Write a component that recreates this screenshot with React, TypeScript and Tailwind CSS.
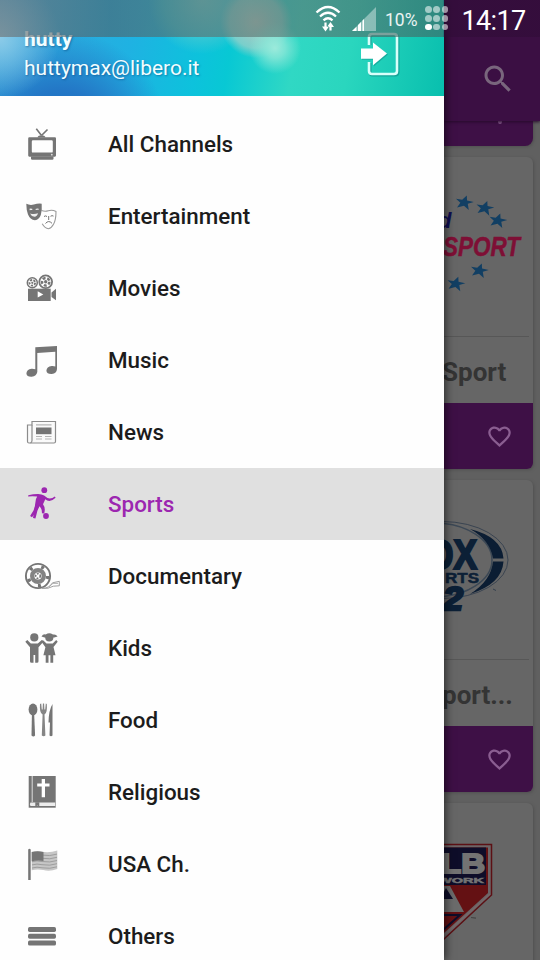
import type { ReactNode } from 'react'

const MENU: { label: string; icon: ReactNode; active?: boolean }[] = [
  { label: 'All Channels', icon: <TvIcon /> },
  { label: 'Entertainment', icon: <MasksIcon /> },
  { label: 'Movies', icon: <CameraIcon /> },
  { label: 'Music', icon: <MusicIcon /> },
  { label: 'News', icon: <NewsIcon /> },
  { label: 'Sports', icon: <SoccerIcon />, active: true },
  { label: 'Documentary', icon: <ReelIcon /> },
  { label: 'Kids', icon: <KidsIcon /> },
  { label: 'Food', icon: <CutleryIcon /> },
  { label: 'Religious', icon: <BibleIcon /> },
  { label: 'USA Ch.', icon: <FlagIcon /> },
  { label: 'Others', icon: <BarsIcon /> },
]

function MenuSvg({ children }: { children: ReactNode }) {
  return (
    <svg viewBox="0 0 36 36" className="h-9 w-9 flex-none" fill="currentColor">
      {children}
    </svg>
  )
}

function TvIcon() {
  return (
    <MenuSvg>
      <path d="M12.3 2.8l5 6.5M23.5 3.5l-6 6" stroke="currentColor" strokeWidth="1.6" fill="none" />
      <path d="M13.5 11.5c.5-3 7.5-3 8 0z" />
      <path
        fillRule="evenodd"
        d="M5.300 11.300h25.600q1.100 0 1.100 1.100v17.200q0 1.100-1.100 1.100H5.300q-1.100 0-1.100-1.100V12.400q0-1.100 1.100-1.100zM9 14.300q-1.200 0-1.200 1.200v9.900q0 1.200 1.200 1.200h18.600q1.200 0 1.200-1.200v-9.900q0-1.200-1.200-1.200z"
      />
      <path d="M7 30.500h22.500v2q0 1.200-1.200 1.200H8.200Q7 33.700 7 32.500z" />
      <circle cx="27.800" cy="28.700" r="0.900" fill="#ddd" />
    </MenuSvg>
  )
}

function MasksIcon() {
  return (
    <MenuSvg>
      <path d="M17.500 12.500q3.500 1.300 6.800.2 4-1.300 7.700.8 0 8.500-2.500 12.800-2 3.800-5 4.500-3.500-.3-6.300-5" fill="#fff" stroke="#9a9a9a" strokeWidth="1.100" />
      <path d="M2.300 5.800q3.500 1.800 7.500.8 4-1.400 7.900-.9.500 7-.9 11.300-1.500 4.500-5.800 5.300Q6 21.500 4 16.500 2.300 12 2.300 5.800z" />
      <path d="M5.500 10.800q1.700-.8 3 .3l-.4 1q-1.300-.4-2.400.1zM11.500 11.100q1.500-1.100 3.200-.4l-.2 1.200q-1.300-.4-2.700.2zM6 15.500q4.500 1.200 8-.3-1 3.400-3.500 3.600-3.100-.2-4.500-3.300z" fill="#eee" />
      <path d="M20 18.500q1.500-1.200 3 0M26.500 18.300q1.500-1.200 3-.2M21.500 25.500q3-3.800 6.500-.2M24.700 18v4" fill="none" stroke="currentColor" strokeWidth="1" />
    </MenuSvg>
  )
}

function CameraIcon() {
  return (
    <MenuSvg>
      <g fill="none" stroke="currentColor">
        <circle cx="8.300" cy="12.800" r="5" strokeWidth="1.500" />
        <circle cx="8.300" cy="12.800" r="2.800" strokeWidth="1.900" strokeDasharray="2.200 1.300" />
        <circle cx="21.700" cy="11.800" r="6.400" strokeWidth="1.800" />
        <circle cx="21.700" cy="11.800" r="3.700" strokeWidth="2.500" strokeDasharray="2.900 1.750" />
      </g>
      <circle cx="21.700" cy="11.800" r="1.700" />
      <circle cx="8.300" cy="12.800" r="1.100" />
      <path d="M4 18.700h22.700V31H4z" />
      <path d="M27.500 22.500l4.500-3.800v11.500l-4.500-3.300z" />
      <path d="M13.700 21.200v6.400l5.600-3.200z" fill="#fff" />
    </MenuSvg>
  )
}

function MusicIcon() {
  return (
    <MenuSvg>
      <path d="M11.300 5.200L33 4v23q-.3 4.300-5.200 5-5 .2-5.400-3.200.2-4 5.300-4.800 2-.2 3.600.5V9.800l-18 1.200v19q-.7 4-5.600 4.700-4.900.2-5.300-3.200.2-4 5.200-4.800 2-.1 3.700.6z" />
    </MenuSvg>
  )
}

function NewsIcon() {
  return (
    <MenuSvg>
      <path d="M8 7.500h23.500v20q0 1.500-1.500 1.500H5q-1.500 0-1.500-1.500V11H8z" fill="#fafafa" stroke="#8c8c8c" strokeWidth="1.200" />
      <path d="M8 11v15.500q0 2-1.600 2.300" fill="none" stroke="#8c8c8c" strokeWidth="1.200" />
      <path d="M12 13.500h15.500v6.700H12z" />
      <path d="M12 10.800h15.500M12 22.500h6M21 22.500h6.500M12 25h6M21 25h6.500" stroke="#b5b5b5" strokeWidth="1.200" />
    </MenuSvg>
  )
}

function SoccerIcon() {
  return (
    <MenuSvg>
      <circle cx="20.300" cy="4.200" r="2.900" />
      <path d="M4.300 9.200q5-1.200 9.200-1.200 4-.2 6.600 1.500 3 2.800 5.700 3.100 2.700-.5 5-2.200l.8 1.400q-3 3-6.200 3.100-2.400-.2-4.100-1.700l-2.300 5q2.800 3.600 1.200 9.300l-2.300-.2q.3-4.600-2.500-7.100l-2 4.600q-1 4.200-2 7.700l-2.400-.4q.7-3.800 1.200-7.300l1.200-8.300q.4-4.300 1.800-6-4.200-.6-9.100-.1z" />
      <path d="M12.400 16.500l-2.900 8-3.400 5.500 1.900 1.300 4.200-5.300 3-6z" />
      <circle cx="22" cy="30" r="2.900" />
    </MenuSvg>
  )
}

function ReelIcon() {
  return (
    <MenuSvg>
      <g fill="none" stroke="currentColor">
        <circle cx="14" cy="18" r="12.100" strokeWidth="1.900" />
        <circle cx="14" cy="18" r="9.700" strokeWidth="3.200" strokeDasharray="3 9.190" />
        <circle cx="14" cy="18" r="5.800" strokeWidth="4.400" strokeOpacity="0.900" />
        <circle cx="14" cy="18" r="2.300" strokeWidth="1.600" strokeDasharray="1.700 1.200" />
      </g>
      <path d="M18 30.300q7 .3 10.500-5.500l6.800-1.500v4.500l-6 .4q-5 3-11.300 2.100z" fill="#fff" stroke="#a0a0a0" strokeWidth="1" />
      <path d="M25 28.800l4-3.500h5" fill="none" stroke="#aaa" strokeWidth="1" />
    </MenuSvg>
  )
}

function KidsIcon() {
  return (
    <MenuSvg>
      <circle cx="10.300" cy="7.400" r="4.100" />
      <circle cx="25.300" cy="7.400" r="4.100" />
      <path d="M17.500 6.500q1.500-2.700 4.300-2l7 .1q3-.8 4.800 1.900l-3.300 1H20.500z" />
      <path d="M1.300 11.800l2-1.700 3.500 3.500h7L17.800 10l1.600 1.700-4.900 5.600v14q0 1.500-1.500 1.500h-1.800V25H9.500v7.800H7.500q-1.500 0-1.500-1.500V17.200z" />
      <path d="M17.500 11.800l1.300-1.700 3.700 3.500h6.200l3.500-3.600 1.500 1.800-4.200 5.200 2 8.300h-2.300v7.500h-2.800v-7.500h-1.900v7.500h-2.800v-7.500h-2.300l2-8z" />
    </MenuSvg>
  )
}

function CutleryIcon() {
  return (
    <MenuSvg>
      <ellipse cx="9" cy="7.400" rx="4.400" ry="6" />
      <path d="M7.900 13h2.300l.9 20.500q-1.700 1.800-3.600 0z" />
      <path d="M16 2l1.200-.5.6 6h.8l.3-6h1.200l.3 6h.8l.6-6 1 .5q.7 9.300-2.300 10.600l.9 21q-1.600 1.500-3.600 0l.8-21Q15.300 11 16 2z" fill="#858585" />
      <path d="M28.500 2v31.500q-1.500 1.500-3 0l.5-13h-1.500Q24.700 8 28.500 2z" />
    </MenuSvg>
  )
}

function BibleIcon() {
  return (
    <MenuSvg>
      <path d="M4.700 2h27v31.700h-27z" />
      <path d="M8.200 2v26" stroke="#ddd" strokeWidth="1" />
      <path d="M6.500 28.500h24.700v3.600H6.500q-1.400-1.800 0-3.600z" fill="#ededed" />
      <path d="M11.300 28.300h4v4.500l-2-1.300-2 1.300z" />
      <path d="M17.700 5h3.300v4.500h4.500v3H21v10.700h-3.300V12.500h-4.500v-3h4.500z" fill="#fff" />
    </MenuSvg>
  )
}

function FlagIcon() {
  return (
    <MenuSvg>
      <path d="M4.200 3.500q1.300-1.300 2.500 0V34H4.200z" />
      <path d="M7.700 6q5-1.500 10-.3 8 1.300 15.600-1.200v18.500q-7 2.700-14 1.100-6-1.500-11.600.2z" fill="#c6c6c6" />
      <path
        d="M8 9.300q5-1.500 10-.2 8 1.400 15-1M8 12.500q5-1.500 10-.2 8 1.400 15-1M8 15.700q5-1.500 10-.2 8 1.400 15-1M8 18.900q5-1.500 10-.2 8 1.400 15-1M8 22q5-1.500 10-.2 8 1.400 15-1"
        fill="none"
        stroke="#9d9d9d"
        strokeWidth="1"
      />
      <path d="M7.700 6q6-1.500 11.800 0v9q-6-1-11.800.3z" />
    </MenuSvg>
  )
}

function BarsIcon() {
  return (
    <MenuSvg>
      <rect x="4" y="9" width="28" height="5" rx="1.700" />
      <rect x="4" y="15.800" width="28" height="5" rx="1.700" />
      <rect x="4" y="22.600" width="28" height="5" rx="1.700" />
    </MenuSvg>
  )
}

function ExitIcon() {
  return (
    <svg viewBox="0 0 44 48" className="h-12 w-11" fill="none">
      <g transform="translate(1 1)" stroke="#0b7d78" strokeOpacity="0.5" strokeWidth="3">
        <path d="M9 13V6q0-3 3-3h22q3 0 3 3v34q0 3-3 3H12q-3 0-3-3v-9" />
      </g>
      <path d="M9 14V6q0-3 3-3h22q3 0 3 3v34q0 3-3 3H12q-3 0-3-3v-9" stroke="#d8fffa" strokeWidth="2.600" />
      <path d="M2 18.500h12v-6l14 11-14 11.800v-6.500H2z" fill="#0b7d78" fillOpacity="0.4" />
      <path d="M1 17.500h12v-6l14 11-14 11.800v-6.500H1z" fill="#fff" />
    </svg>
  )
}

function WifiIcon() {
  return (
    <svg viewBox="0 0 26 28" className="h-7 w-[26px]" fill="none" stroke="#fff" strokeWidth="2.300">
      <path d="M1.500 7.500Q13-3.500 24.500 7.500" />
      <path d="M5 11.500q8-7.500 16 0" />
      <path d="M8.500 15.300q4.500-4 9 0" />
      <path d="M10.500 17.500v5M15.500 25.500v-5" strokeWidth="2.200" />
      <path d="M7 21.500h7l-3.500 5zM12 22h7l-3.500-5z" fill="#fff" stroke="none" />
    </svg>
  )
}

function SignalIcon() {
  return (
    <svg viewBox="0 0 24 24" className="h-6 w-6">
      <path d="M24 0v24H0z" fill="#fff" fillOpacity="0.4" />
      <path d="M0 24l4.500-4.300V24zM6 24v-6l3-3v9zM10.500 24V13.500L12 12v12z" fill="#fff" />
    </svg>
  )
}

function BatteryDots() {
  return (
    <div className="grid grid-cols-3 gap-x-[1.5px] gap-y-[2px]">
      {[0, 1, 2, 3, 4, 5, 6, 7, 8].map((i) => (
        <span key={i} className={`h-[6.8px] w-[6.8px] rounded-full ${i === 6 ? 'bg-white' : 'bg-white/55'}`} />
      ))}
    </div>
  )
}

function HeartIcon() {
  return (
    <svg viewBox="0 0 24 24" className="h-[27px] w-[27px]" fill="#8a5e91">
      <path d="M16.500 3c-1.740 0-3.410.81-4.500 2.090C10.910 3.810 9.240 3 7.500 3 4.420 3 2 5.420 2 8.500c0 3.780 3.400 6.860 8.550 11.540L12 21.350l1.450-1.320C18.600 15.360 22 12.280 22 8.500 22 5.420 19.580 3 16.500 3zm-4.400 15.550l-.1.100-.1-.100C7.140 14.240 4 11.390 4 8.500 4 6.500 5.500 5 7.500 5c1.540 0 3.040.99 3.570 2.360h1.870C13.460 5.990 14.960 5 16.500 5c2 0 3.500 1.500 3.500 3.500 0 2.890-3.140 5.740-7.900 10.050z" />
    </svg>
  )
}

const STARS = [
  [20.5, 45.7],
  [41, 51.3],
  [54, 63.7],
  [35.5, 113.7],
  [12, 127],
]

function EurosportLogo() {
  return (
    <svg viewBox="0 0 88 179" className="h-[179px] w-[88px]">
      {STARS.map(([x, y]) => (
        <path
          key={x}
          transform={`translate(${x} ${y}) rotate(10)`}
          d="M1-7.500l1.100 4.800 6.900.3-5.600 2.800 2.100 6.100L0 3-6.500 6l2.400-5.300L-9-2.300l6.200-.2z"
          fill="#123f63"
        />
      ))}
      <text x="-6" y="71" fontSize="22" fontWeight="700" fontStyle="italic" fill="#100f52" fontFamily="'Liberation Sans', sans-serif">
        d
      </text>
      <text
        x="-1"
        y="98.500"
        fontSize="28"
        fontWeight="700"
        fontStyle="italic"
        fill="#7e0f35"
        stroke="#7e0f35"
        strokeWidth="0.500"
        fontFamily="'Liberation Sans', sans-serif"
        textLength="77"
        lengthAdjust="spacingAndGlyphs"
      >
        SPORT
      </text>
    </svg>
  )
}

function FoxSportsLogo() {
  return (
    <svg viewBox="0 0 88 179" className="h-[179px] w-[88px]">
      <ellipse cx="-2" cy="80" rx="66" ry="38.500" fill="none" stroke="#34404e" strokeWidth="0.900" />
      <ellipse cx="-10" cy="80" rx="58" ry="37" fill="none" stroke="#3c4855" strokeWidth="1.500" />
      <path d="M26 49q32 8 33.500 29.500H49Q46 60 26 49zM49 81.500h10.500Q58 104 26 114q21-13 23-32.500z" fill="#0b1d33" />
      <g fill="#0c2036" stroke="#0c2036" fontFamily="'Liberation Sans', sans-serif" fontWeight="700">
        <text x="-18" y="88.500" fontSize="42" strokeWidth="2.200" textLength="51" lengthAdjust="spacingAndGlyphs">
          OX
        </text>
        <text x="1" y="102.800" fontSize="14" strokeWidth="0.500" textLength="34" lengthAdjust="spacingAndGlyphs">
          RTS
        </text>
        <text x="-1" y="130" fontSize="33" fontStyle="italic" strokeWidth="2.500" textLength="20" lengthAdjust="spacingAndGlyphs">
          2
        </text>
      </g>
      <path d="M49 109l3 1.500" stroke="#34404e" strokeWidth="1" />
    </svg>
  )
}

function MlbLogo() {
  return (
    <svg viewBox="0 0 88 179" className="h-[179px] w-[88px]">
      <path d="M-10 41.500h57.500V92L-1 137h-9z" fill="#6b6567" stroke="#5c1014" strokeWidth="1.500" />
      <path d="M-10 44.500h54V90L-1 131h-9z" fill="#641113" />
      <path d="M-10 44.500h52V82H-10z" fill="#0e0d29" />
      <g fill="#737373" stroke="#737373" fontFamily="'Liberation Sans', sans-serif" fontWeight="700">
        <text x="-3" y="69.500" fontSize="28.500" strokeWidth="2" textLength="44" lengthAdjust="spacingAndGlyphs">
          LB
        </text>
        <text x="-6" y="79.900" fontSize="8" strokeWidth="0.500" textLength="46" lengthAdjust="spacingAndGlyphs">
          WORK
        </text>
      </g>
      <path d="M-10 83H6l14 26H-10z" fill="#6b6b6b" />
      <path d="M-4 96L2 85l7 11z" fill="#0e0d29" />
      <path d="M-10 112h26L-1 127" fill="none" stroke="#0e0d29" strokeWidth="2" />
      <path d="M46 91L-1 133" fill="none" stroke="#77686a" strokeWidth="1.200" />
      <path d="M27 114.500l5 .7" stroke="#444" strokeWidth="1.200" />
    </svg>
  )
}

function ChannelCard({ logo, title }: { logo: ReactNode; title?: string }) {
  return (
    <div className="mb-[11px] h-[312px] w-[88.5px] flex-none overflow-hidden rounded-r-md bg-[#666] shadow-[1px_1px_3px_#505050]">
      <div className="h-[179px] w-[88px]">{logo}</div>
      <div className="mr-1 h-px bg-[#575757]" />
      <div className="flex h-[66px] items-center overflow-hidden whitespace-nowrap pt-1 text-[26px] font-bold text-[#343434]">
        <span className="-ml-[2px]">{title}</span>
      </div>
      <div className="flex h-[66px] items-center justify-end bg-[#3e1046] pr-5">
        <HeartIcon />
      </div>
    </div>
  )
}

function ChannelsPage() {
  return (
    <section className="isolate ml-auto flex h-full w-24 flex-col overflow-hidden bg-[#606060]">
      <div className="z-10 flex h-[121px] flex-none justify-center bg-[#3b0f43] pl-3 pt-[61px] shadow-[0_1px_3px_#260a2b]">
        <svg viewBox="0 0 24 24" className="h-9 w-9" fill="#79667d">
          <path d="M15.500 14h-.79l-.28-.27C15.410 12.590 16 11.110 16 9.500 16 5.910 13.090 3 9.500 3S3 5.910 3 9.500 5.910 16 9.500 16c1.610 0 3.090-.59 4.230-1.570l.27.28v.79l5 4.990L20.490 19l-4.990-5zm-6 0C7.010 14 5 11.990 5 9.500S7.010 5 9.500 5 14 7.010 14 9.500 11.990 14 9.500 14z" />
        </svg>
      </div>
      <div className="mb-[11px] flex h-[25px] w-[88.5px] flex-none justify-end rounded-br-lg bg-[#3e1046] pr-[31px] shadow-[1px_1px_3px_#505050]">
        {/* tip of the heart that scrolled under the app bar */}
        <span className="h-[3px] w-1 rounded-b-full bg-[#8a5e91]" />
      </div>
      <ChannelCard logo={<EurosportLogo />} title="Sport" />
      <ChannelCard logo={<FoxSportsLogo />} title="port..." />
      <ChannelCard logo={<MlbLogo />} />
    </section>
  )
}

function StatusBar() {
  return (
    <div className="absolute inset-x-0 top-0 z-20 flex h-[37px] items-start bg-[linear-gradient(to_right,#6f7476a6_0,#4a6670a6_110px,#5f7a76a6_250px,#3f6a66a6_443px,#2e0c3580_444px)] text-white">
      <div className="ml-[315px] mt-[5px]">
        <WifiIcon />
      </div>
      <div className="ml-[11px] mt-[7px]">
        <SignalIcon />
      </div>
      <span className="ml-[9px] mt-[8px] w-10 text-[17.5px] leading-6 text-white/90">10%</span>
      <div className="mt-[6px]">
        <BatteryDots />
      </div>
      <span className="ml-[13px] mt-[5px] text-[27px] leading-8 tracking-[-0.6px]">14:17</span>
    </div>
  )
}

function Drawer() {
  return (
    <aside className="absolute inset-y-0 left-0 z-10 w-[444px] overflow-hidden bg-[#fefefe] shadow-[2px_0_8px_rgba(0,0,0,0.55)]">
      <header className="flex h-24 justify-between bg-[radial-gradient(circle_at_275px_48px,#9ceadb_0,#8ee8d8cc_10px,transparent_26px),radial-gradient(circle_at_256px_22px,#b5c9c2_0,#94d0cacc_26px,transparent_36px),radial-gradient(circle_at_202px_0px,#66cfd0_0,#3cc8d4cc_38px,transparent_54px),radial-gradient(circle_at_0px_38px,#8ccbe8_0,transparent_60px),radial-gradient(circle_at_60px_140px,#1668bc_0,#2377c6_50px,transparent_110px),linear-gradient(100deg,#36a5dc_0%,#1fb2e2_30%,#0dc2dc_45%,#08c8d4_52%,#30d8c4_66%,#2ad6be_78%,#08bfae_100%)] pl-6 pr-10 pt-[27px]">
        <div className="text-[#f2fdff] [text-shadow:1px_1px_2px_rgba(0,60,110,0.45)]">
          <div className="text-[21px] font-bold leading-6">hutty</div>
          <div className="mt-[3px] text-[21px] leading-7">huttymax@libero.it</div>
        </div>
        <div className="mt-[4px]">
          <ExitIcon />
        </div>
      </header>
      <nav className="pt-3">
        {MENU.map((item) => (
          <button
            key={item.label}
            className={`flex h-[72px] w-full items-center gap-12 pl-6 text-left ${
              item.active ? 'bg-[#e0e0e0] text-[#9c27b0]' : 'text-[#757575]'
            }`}
          >
            {item.icon}
            <span className={`pt-0.5 text-[22.4px] font-medium ${item.active ? 'text-[#9c27b0]' : 'text-[#1c1c1c]'}`}>
              {item.label}
            </span>
          </button>
        ))}
      </nav>
    </aside>
  )
}

export default function App() {
  return (
    <div className="relative h-[960px] w-[540px] overflow-hidden bg-[#606060] font-[Roboto,sans-serif]">
      <ChannelsPage />
      <Drawer />
      <StatusBar />
    </div>
  )
}
